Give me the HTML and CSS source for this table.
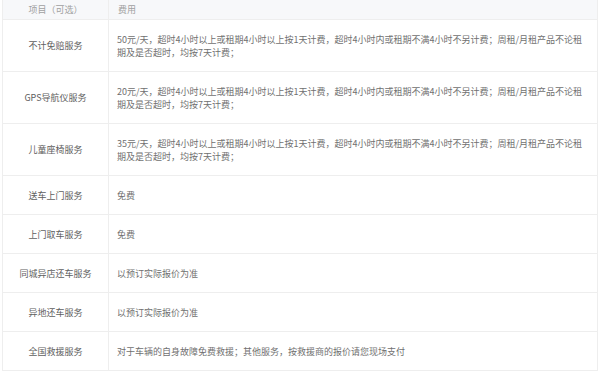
FILE: index.html
```html
<!DOCTYPE html>
<html lang="zh-CN">
<head>
<meta charset="utf-8">
<title>增值服务</title>
<link rel="stylesheet" href="styles.css">
</head>
<body>
<table class="fee-table">
  <colgroup><col class="col-item"><col class="col-fee"></colgroup>
  <thead>
    <tr><th class="item">项目（可选）</th><th class="fee">费用</th></tr>
  </thead>
  <tbody>
    <tr><td class="item">不计免赔服务</td><td class="fee">50元/天，超时4小时以上或租期4小时以上按1天计费，超时4小时内或租期不满4小时不另计费；周租/月租产品不论租期及是否超时，均按7天计费；</td></tr>
    <tr><td class="item">GPS导航仪服务</td><td class="fee">20元/天，超时4小时以上或租期4小时以上按1天计费，超时4小时内或租期不满4小时不另计费；周租/月租产品不论租期及是否超时，均按7天计费；</td></tr>
    <tr><td class="item">儿童座椅服务</td><td class="fee">35元/天，超时4小时以上或租期4小时以上按1天计费，超时4小时内或租期不满4小时不另计费；周租/月租产品不论租期及是否超时，均按7天计费；</td></tr>
    <tr><td class="item">送车上门服务</td><td class="fee">免费</td></tr>
    <tr><td class="item">上门取车服务</td><td class="fee">免费</td></tr>
    <tr><td class="item">同城异店还车服务</td><td class="fee">以预订实际报价为准</td></tr>
    <tr><td class="item">异地还车服务</td><td class="fee">以预订实际报价为准</td></tr>
    <tr><td class="item">全国救援服务</td><td class="fee">对于车辆的自身故障免费救援；其他服务，按救援商的报价请您现场支付</td></tr>
  </tbody>
</table>
</body>
</html>
```
FILE: styles.css
```css
html, body {
  margin: 0;
  padding: 0;
  background: #ffffff;
}
body {
  padding: 0 3px 0 2px;
  font-family: "Noto Sans CJK SC", "Noto Sans", sans-serif;
  font-size: 9px;
  color: #707070;
}
.fee-table {
  width: 596px;
  border-collapse: collapse;
  table-layout: fixed;
}
.col-item { width: 106px; }
.fee-table th,
.fee-table td {
  border: 1px solid #eeeeee;
  font-weight: normal;
  line-height: 13px;
  vertical-align: middle;
}
.fee-table thead th {
  background: #f7f8fa;
  color: #a0a0a0;
  height: 19px;
  padding: 0 8px;
  border-top: none;
}
.fee-table th.fee { text-align: left; padding-left: 9px; }
.fee-table td {
  padding: 12.5px 14px 12.5px 8px;
}
.fee-table td.item {
  text-align: center;
  color: #606060;
  padding-left: 4px;
  padding-right: 4px;
}
.fee-table th.item { text-align: center; }
```
